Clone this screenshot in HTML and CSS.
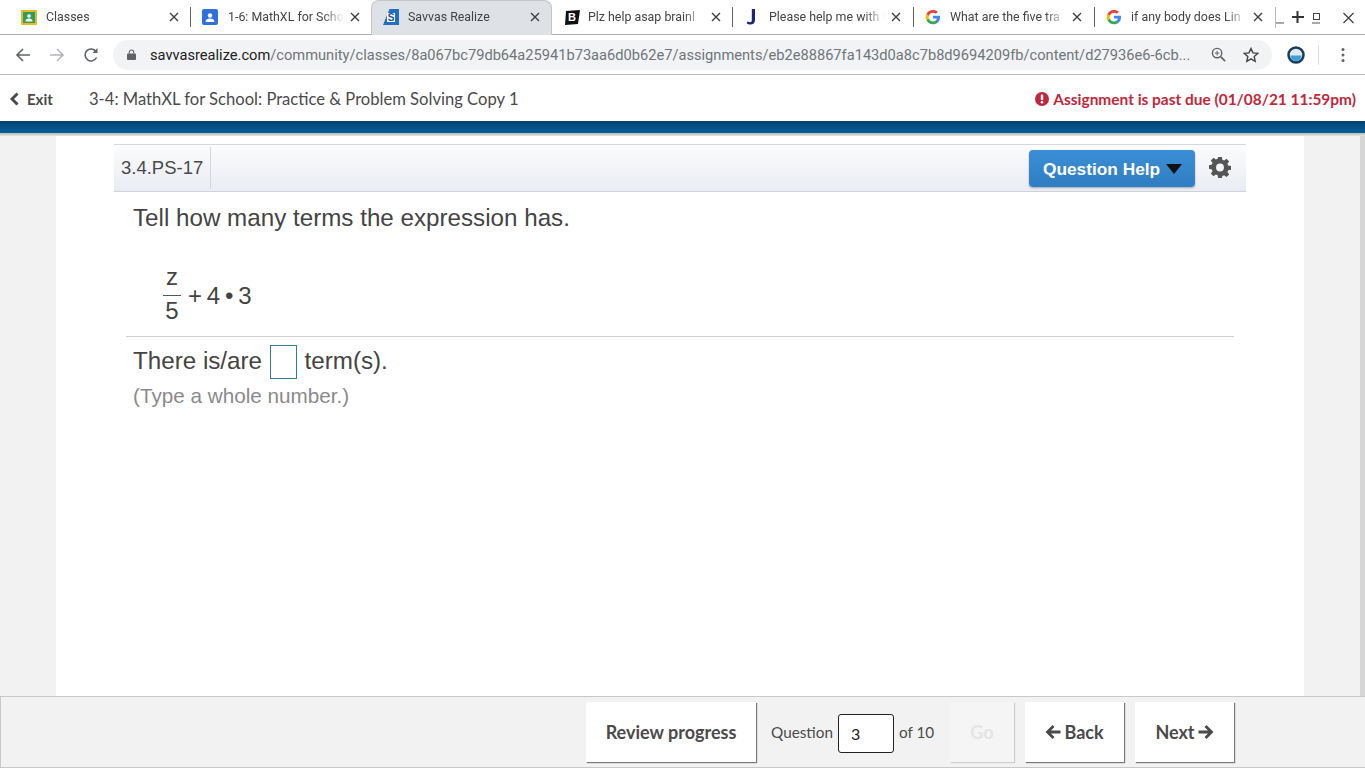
FILE: index.html
```html
<!DOCTYPE html>
<html lang="en">
  <head>
    <meta charset="UTF-8" />
    <title>Savvas Realize</title>
    <link rel="stylesheet" href="styles.css">
  </head>
  <body>
    <!-- browser chrome -->
    <div class="tabstrip">
      <div class="tab tab-first">
        <svg class="favicon" viewBox="0 0 16 16"><rect y="1" width="16" height="15" rx="1" fill="#e9b824"/><rect x="2" y="3" width="12" height="11" fill="#2f9e5b"/><circle cx="8" cy="7" r="1.800" fill="#fff"/><path d="M4.500 12.500c0-2.200 1.500-3 3.500-3s3.500.8 3.500 3z" fill="#fff"/></svg>
        <span class="tab-title">Classes</span>
        <svg class="tab-x" viewBox="0 0 10 10"><path d="M1 1l8 8M9 1L1 9"/></svg>
      </div>
      <div class="tab tab-second">
        <svg class="favicon" viewBox="0 0 16 16"><rect width="16" height="16" rx="2" fill="#2f6fde"/><circle cx="8" cy="6.500" r="2.200" fill="#fff"/><path d="M3.500 13c0-2.600 2-3.600 4.500-3.600s4.500 1 4.500 3.600z" fill="#fff"/></svg>
        <span class="tab-title">1-6: MathXL for Scho</span>
        <svg class="tab-x" viewBox="0 0 10 10"><path d="M1 1l8 8M9 1L1 9"/></svg>
      </div>
      <div class="tab tab-active">
        <svg class="favicon" viewBox="0 0 16 16"><path d="M0 16L6.500 0H16v16z" fill="#1f6fc4"/><rect x="4" y="4" width="8" height="9" fill="#fff"/><text x="8" y="12" class="favicon-s">S</text></svg>
        <span class="tab-title">Savvas Realize</span>
        <svg class="tab-x" viewBox="0 0 10 10"><path d="M1 1l8 8M9 1L1 9"/></svg>
      </div>
      <div class="tab tab-fourth">
        <svg class="favicon" viewBox="0 0 16 16"><path d="M2 2l14-1-2 14-13 1z" fill="#111"/><text x="8" y="12" class="favicon-b">B</text></svg>
        <span class="tab-title">Plz help asap brainl</span>
        <svg class="tab-x" viewBox="0 0 10 10"><path d="M1 1l8 8M9 1L1 9"/></svg>
      </div>
      <div class="tab tab-sep">
        <svg class="favicon" viewBox="0 0 16 16"><path d="M11 0v11c0 3-2 4.500-4.500 4.500-1.500 0-3-.5-3.800-1.300l1-2c.7.6 1.500 1 2.300 1 1.200 0 1.800-.7 1.800-2.200V0z" fill="#1a237e"/></svg>
        <span class="tab-title">Please help me with t</span>
        <svg class="tab-x" viewBox="0 0 10 10"><path d="M1 1l8 8M9 1L1 9"/></svg>
      </div>
      <div class="tab tab-sep">
        <svg class="favicon" viewBox="0 0 48 48"><path fill="#4285f4" d="M45 24.500c0-1.600-.1-3.100-.4-4.500H24v8.500h11.800c-.5 2.700-2 5-4.400 6.600v5.500h7.100c4.200-3.900 6.500-9.500 6.500-16.100z"/><path fill="#34a853" d="M24 46c5.900 0 10.900-2 14.500-5.400l-7.100-5.500c-2 1.300-4.500 2.100-7.400 2.100-5.700 0-10.500-3.800-12.200-9H4.500v5.700C8.100 41.100 15.500 46 24 46z"/><path fill="#fbbc05" d="M11.800 28.700c-.4-1.300-.7-2.700-.7-4.200s.3-2.900.7-4.200v-5.700H4.500C3 17.600 2 21 2 24.500s1 6.900 2.500 9.900z"/><path fill="#ea4335" d="M24 11.300c3.200 0 6.100 1.100 8.400 3.300l6.300-6.300C34.900 4.800 29.900 3 24 3 15.500 3 8.100 7.900 4.500 14.600l7.300 5.700c1.700-5.200 6.500-9 12.200-9z"/></svg>
        <span class="tab-title">What are the five tra</span>
        <svg class="tab-x" viewBox="0 0 10 10"><path d="M1 1l8 8M9 1L1 9"/></svg>
      </div>
      <div class="tab tab-sep">
        <svg class="favicon" viewBox="0 0 48 48"><path fill="#4285f4" d="M45 24.500c0-1.600-.1-3.100-.4-4.500H24v8.500h11.800c-.5 2.700-2 5-4.400 6.600v5.500h7.100c4.200-3.900 6.500-9.500 6.500-16.100z"/><path fill="#34a853" d="M24 46c5.900 0 10.900-2 14.500-5.400l-7.100-5.500c-2 1.300-4.500 2.100-7.400 2.100-5.700 0-10.500-3.800-12.200-9H4.500v5.700C8.100 41.100 15.500 46 24 46z"/><path fill="#fbbc05" d="M11.800 28.700c-.4-1.300-.7-2.700-.7-4.200s.3-2.900.7-4.200v-5.700H4.500C3 17.600 2 21 2 24.500s1 6.900 2.500 9.900z"/><path fill="#ea4335" d="M24 11.300c3.200 0 6.100 1.100 8.400 3.300l6.300-6.300C34.900 4.800 29.900 3 24 3 15.500 3 8.100 7.900 4.500 14.600l7.300 5.700c1.700-5.200 6.500-9 12.200-9z"/></svg>
        <span class="tab-title">if any body does Lin</span>
        <svg class="tab-x" viewBox="0 0 10 10"><path d="M1 1l8 8M9 1L1 9"/></svg>
      </div>
      <div class="window-btns">
        <svg class="win-icons" viewBox="0 0 89 34">
          <path d="M0 7v21" stroke="#777" fill="none"/>
          <path d="M1 23h8" stroke="#555" fill="none"/>
          <path d="M22.500 11v12M17 17h12" stroke="#333" stroke-width="2" fill="none"/>
          <rect x="38.500" y="13.500" width="6" height="6" stroke="#444" fill="none"/>
          <path d="M37 23h8" stroke="#555" fill="none"/>
          <path d="M68.500 13l10 10M78.500 13l-10 10" stroke="#444" stroke-width="1.300" fill="none"/>
        </svg>
      </div>
    </div>

    <div class="addressbar">
      <svg class="nav-icon" viewBox="0 0 16 16"><path d="M15 8H2M8 2L2 8l6 6" fill="none" stroke="#5f6368" stroke-width="1.600"/></svg>
      <svg class="nav-icon" viewBox="0 0 16 16"><path d="M1 8h13M8 2l6 6-6 6" fill="none" stroke="#b4b7bb" stroke-width="1.600"/></svg>
      <svg class="nav-icon" viewBox="0 0 16 16"><path d="M13.500 10.500A6 6 0 1 1 13 4.500" fill="none" stroke="#5f6368" stroke-width="1.600"/><path d="M14.500 1v5h-5z" fill="#5f6368"/></svg>
      <div class="omnibox">
        <svg class="lock" viewBox="0 0 10 12"><path d="M2.500 5V3.500a2.500 2.500 0 0 1 5 0V5" fill="none" stroke="#5f6368" stroke-width="1.200"/><rect y="5" width="10" height="7" rx="1" fill="#5f6368"/></svg>
        <span class="url"><span class="url-host">savvasrealize.com</span>/community/classes/8a067bc79db64a25941b73aa6d0b62e7/assignments/eb2e88867fa143d0a8c7b8d9694209fb/content/d27936e6-6cb...</span>
        <svg class="omni-icon" viewBox="0 0 16 16"><circle cx="6.500" cy="6.500" r="5" fill="none" stroke="#5f6368" stroke-width="1.500"/><path d="M10.500 10.500L15 15" stroke="#5f6368" stroke-width="1.800"/><path d="M4 6.500h5M6.500 4v5" stroke="#5f6368"/></svg>
        <svg class="omni-star" viewBox="0 0 16 16"><path d="M8 1.500l2 4.400 4.700.5-3.500 3.200 1 4.700L8 11.900l-4.200 2.400 1-4.700L1.300 6.400 6 5.900z" fill="none" stroke="#444" stroke-width="1.400"/></svg>
      </div>
      <svg class="profile" viewBox="0 0 18 18"><circle cx="9" cy="9" r="7.500" fill="#dfeaf3" stroke="#1c3c5a" stroke-width="2.500"/><path d="M3.500 9.500h11a5.500 5.500 0 0 1-11 0z" fill="#3aa0d8"/></svg>
      <span class="bar-divider"></span>
      <svg class="kebab" viewBox="0 0 4 16"><circle cx="2" cy="2.500" r="1.500" fill="#5f6368"/><circle cx="2" cy="8" r="1.500" fill="#5f6368"/><circle cx="2" cy="13.500" r="1.500" fill="#5f6368"/></svg>
    </div>

    <!-- app header -->
    <header class="app-header">
      <a class="exit"><svg class="exit-chevron" viewBox="0 0 9 14"><path d="M7.500 1.500L2 7l5.500 5.500" fill="none" stroke="#4a4a4a" stroke-width="3"/></svg>Exit</a>
      <div class="assignment-title">3-4: MathXL for School: Practice &amp; Problem Solving Copy 1</div>
      <div class="past-due">
        <svg class="due-icon" viewBox="0 0 14 14"><circle cx="7" cy="7" r="7" fill="#c1273b"/><rect x="5.800" y="2.500" width="2.400" height="5.700" rx="1" fill="#fff"/><circle cx="7" cy="10.300" r="1.300" fill="#fff"/></svg>
        Assignment is past due (01/08/21 11:59pm)
      </div>
    </header>
    <div class="blue-band"></div>

    <main class="stage">
      <div class="sheet">
        <div class="question-bar">
          <div class="question-id">3.4.PS-17</div>
          <button class="help-btn">Question Help<span class="caret"></span></button>
          <svg class="gear" viewBox="0 0 24 24"><path fill="#555" fill-rule="evenodd" d="M10 1h4l.6 3.100 1.900.8L19.100 3 22 5.900l-1.900 2.600.8 1.900L24 11v4l-3.100.6-.8 1.900 1.900 2.600-2.900 2.900-2.600-1.900-1.900.8L14 24h-4l-.6-3.100-1.900-.8L4.900 22 2 19.100l1.900-2.600-.8-1.900L0 14v-4l3.100-.6.8-1.900L2 4.900 4.900 2l2.600 1.900 1.900-.8zM12 8.200a4.300 4.300 0 1 0 0 8.600 4.300 4.300 0 0 0 0-8.600z"/></svg>
        </div>
        <div class="question-body">
          <p class="prompt">Tell how many terms the expression has.</p>
          <div class="expression">
            <span class="fraction"><span class="numer">z</span><span class="denom">5</span></span>
            <span class="expr-rest">+&thinsp;4&thinsp;•&thinsp;3</span>
          </div>
        </div>
        <div class="answer-area">
          <div class="answer-line">There is/are <span class="answer-box"></span> term(s).</div>
          <div class="hint">(Type a whole number.)</div>
        </div>
      </div>
    </main>

    <footer class="footer-bar">
      <button class="foot-btn review-btn">Review progress</button>
      <div class="question-nav">
        <span>Question</span>
        <span class="question-input">3</span>
        <span>of 10</span>
      </div>
      <button class="foot-btn go-btn">Go</button>
      <button class="foot-btn back-btn"><svg class="arrow arrow-back" viewBox="0 0 16 14"><path d="M7.500 0l2 2L6 5.500h9.500v3H6L9.500 12l-2 2L.5 7z" fill="#4a4a4a"/></svg>Back</button>
      <button class="foot-btn next-btn">Next<svg class="arrow arrow-next" viewBox="0 0 16 14"><path d="M8.500 0l-2 2L10 5.500H.5v3H10L6.500 12l2 2 7-7z" fill="#4a4a4a"/></svg></button>
    </footer>
  </body>
</html>
```

FILE: styles.css
```css
* {
  box-sizing: border-box;
}

html, body {
  height: 100%;
}

body {
  margin: 0;
  height: 768px;
  overflow: hidden;
  display: flex;
  flex-direction: column;
  background: #f2f2f2;
  font-family: "Liberation Sans", Arial, sans-serif;
  color: #444;
}

/* tab strip */
.tabstrip {
  height: 35px;
  flex: none;
  display: flex;
  background: #fff;
  border-bottom: 1px solid #a9abae;
  font-family: Roboto, sans-serif;
  font-size: 12.4px;
  color: #444;
}

.tab {
  display: flex;
  align-items: center;
  width: 181px;
  height: 34px;
  padding: 0 11px 0 12px;
  position: relative;
  flex: none;
}

.tab-first {
  width: 190px;
  padding-left: 21px;
}

.tab-second {
  padding-left: 12px;
}

.tab-second .favicon {
  margin-right: 10px;
}

.tab-second::before, .tab-sep::before {
  content: "";
  position: absolute;
  left: 0;
  top: 7px;
  height: 20px;
  width: 1px;
  background: #5f6368;
}

.tab-active {
  background: #dee1e6;
  border-radius: 8px 8px 0 0;
  padding-left: 11px;
  height: 35px;
  padding-bottom: 2px;
  border: 1px solid #c3c5c8;
  border-bottom: none;
}

.tab-fourth {
  width: 180px;
}

.tab-fourth .favicon {
  margin-right: 8px;
}

.tab-sep {
  padding-right: 12px;
}

.favicon {
  width: 16px;
  height: 16px;
  flex: none;
  margin-right: 9px;
}

.favicon-s, .favicon-b {
  font-family: "Liberation Sans", sans-serif;
  font-weight: bold;
  text-anchor: middle;
}

.favicon-s {
  font-size: 10px;
  fill: #1f4f8f;
}

.favicon-b {
  font-size: 11px;
  fill: #fff;
}

.tab-title {
  flex: 1;
  min-width: 0;
  overflow: hidden;
  white-space: nowrap;
  margin-top: -1px;
  -webkit-mask-image: linear-gradient(to right, #000 calc(100% - 22px), transparent calc(100% - 1px));
  mask-image: linear-gradient(to right, #000 calc(100% - 22px), transparent calc(100% - 1px));
}

.tab-x {
  width: 10px;
  height: 10px;
  flex: none;
  margin-left: 5px;
  fill: none;
  stroke: #3c4043;
  stroke-width: 1.400;
}

.window-btns {
  flex: 1;
  min-width: 0;
}

.win-icons {
  display: block;
  width: 89px;
  height: 34px;
}

/* address bar */
.addressbar {
  height: 40px;
  flex: none;
  display: flex;
  align-items: center;
  background: #fff;
  border-bottom: 1px solid #b8babc;
  padding-left: 15px;
}

.nav-icon {
  width: 16px;
  height: 16px;
  flex: none;
  margin-right: 18px;
}

.omnibox {
  width: 1159px;
  height: 30px;
  flex: none;
  display: flex;
  align-items: center;
  margin-left: -4px;
  padding-left: 14px;
  border-radius: 15px;
  background: #f1f3f4;
  font-family: Roboto, sans-serif;
  font-size: 14.65px;
}

.lock {
  width: 9px;
  height: 11px;
  flex: none;
  margin-right: 14px;
}

.url {
  width: 1043px;
  flex: none;
  white-space: nowrap;
  overflow: hidden;
  color: #70757a;
}

.url-host {
  color: #202124;
}

.omni-icon {
  width: 15px;
  height: 15px;
  flex: none;
  margin-left: 18px;
}

.omni-star {
  width: 16px;
  height: 16px;
  flex: none;
  margin-left: 17px;
}

.profile {
  width: 18px;
  height: 18px;
  flex: none;
  margin-left: 15px;
}

.bar-divider {
  width: 1px;
  height: 20px;
  background: #dadce0;
  margin-left: 13px;
  flex: none;
}

.kebab {
  width: 4px;
  height: 16px;
  flex: none;
  margin-left: 22px;
}

/* app header */
.app-header {
  height: 46px;
  flex: none;
  display: flex;
  align-items: center;
  background: #fff;
  font-family: Lato, sans-serif;
  font-size: 16px;
  color: #4a4a4a;
  padding: 1px 9px 0 10px;
}

.exit {
  display: flex;
  align-items: center;
  width: 79px;
  font-weight: 700;
  font-size: 15px;
  padding-top: 1px;
}

.exit-chevron {
  width: 9px;
  height: 14px;
  margin-right: 8px;
}

.assignment-title {
  flex: 1;
  font-size: 16.6px;
}

.past-due {
  display: flex;
  align-items: center;
  color: #c1273b;
  font-weight: 700;
  font-size: 15.45px;
  padding-top: 1px;
}

.due-icon {
  width: 14px;
  height: 14px;
  margin-right: 4px;
}

.blue-band {
  height: 15px;
  flex: none;
  background: linear-gradient(to bottom, #033f6e, #04609a 12px, #b9b6ae 12px, #e6e5e1 15px);
}

/* question sheet */
.stage {
  flex: 1;
  min-height: 0;
  padding-left: 56px;
  background: linear-gradient(to right, #f2f2f2 1360px, #d6d6d6 1360px);
}

.sheet {
  width: 1248px;
  height: 100%;
  background: #fff;
  padding: 8px 58px 0;
}

.question-bar {
  height: 48px;
  display: flex;
  align-items: center;
  background: linear-gradient(to bottom, #fbfcfd, #e9ecf2);
  border-top: 1px solid #d6d8dc;
  border-bottom: 1px solid #cfd2d8;
}

.question-id {
  height: 42px;
  width: 97px;
  padding-left: 7px;
  display: flex;
  align-items: center;
  border-right: 1px solid #d4d6da;
  font-size: 18.5px;
  color: #4a4a4a;
  margin-bottom: 1px;
}

.help-btn {
  margin-left: auto;
  height: 37px;
  width: 166px;
  display: flex;
  align-items: center;
  padding: 2px 0 0 14px;
  border: none;
  border-radius: 4px;
  background: linear-gradient(to bottom, #3b8fd6, #2f7dc2);
  box-shadow: 0 1px 2px rgba(0, 0, 0, 0.3);
  color: #fff;
  font-family: "Liberation Sans", sans-serif;
  font-size: 17.3px;
  font-weight: bold;
}

.caret {
  width: 0;
  height: 0;
  margin-left: 6px;
  border-left: 8px solid transparent;
  border-right: 8px solid transparent;
  border-top: 10px solid #111;
}

.gear {
  width: 22px;
  height: 22px;
  margin: 0 15px 3px 14px;
}

.question-body {
  margin: 0 12px;
  padding: 0 7px;
  height: 145px;
  border-bottom: 1px solid #cfcfcf;
}

.prompt {
  margin: 0;
  padding-top: 12px;
  font-size: 24.2px;
  line-height: 28px;
  color: #444;
}

.expression {
  display: flex;
  align-items: center;
  margin: 32px 0 0 30px;
  font-size: 24px;
}

.fraction {
  display: flex;
  flex-direction: column;
  align-items: center;
  width: 18px;
  margin-right: 7px;
}

.numer {
  line-height: 26px;
  padding-bottom: 5px;
  width: 100%;
  text-align: center;
  border-bottom: 1px solid #555;
}

.denom {
  line-height: 30px;
}

.expr-rest {
  padding-top: 2px;
}

.answer-area {
  padding: 8px 0 0 19px;
}

.answer-line {
  display: flex;
  align-items: center;
  font-size: 24.2px;
  height: 34px;
  padding-bottom: 2px;
  white-space: pre;
}

.answer-box {
  align-self: flex-start;
  width: 27px;
  height: 34px;
  margin: 0 1px;
  border: 1px solid #2e7f94;
  background: #fff;
}

.hint {
  margin-top: 3px;
  font-size: 20.7px;
  line-height: 28px;
  color: #8a8a8a;
}

/* footer */
.footer-bar {
  height: 72px;
  flex: none;
  display: flex;
  align-items: flex-start;
  padding: 5px 0 0 585px;
  background: #f2f2f2;
  border-top: 1px solid #c8c8c8;
  border-bottom: 1px solid #c8c8c8;
  border-left: 1px solid #c8c8c8;
  font-family: Lato, sans-serif;
  color: #4a4a4a;
}

.foot-btn {
  height: 60px;
  border: none;
  background: #fff;
  box-shadow: 1px 1px 1px rgba(0, 0, 0, 0.5);
  font-family: Lato, sans-serif;
  font-size: 18px;
  font-weight: 700;
  color: #4a4a4a;
  padding: 0;
  display: flex;
  align-items: center;
  justify-content: center;
}

.review-btn {
  width: 170px;
}

.question-nav {
  width: 194px;
  height: 60px;
  display: flex;
  align-items: center;
  padding-left: 15px;
  font-size: 15.3px;
}

.question-input {
  width: 56px;
  height: 39px;
  margin: 2px 5px 0;
  padding-left: 12px;
  display: flex;
  align-items: center;
  background: #fff;
  border: 1px solid #222;
  border-radius: 3px;
  color: #222;
  font-size: 16px;
}

.go-btn {
  width: 64px;
  color: #e4e4e4;
  background: #f5f5f5;
  box-shadow: 1px 1px 1px rgba(0, 0, 0, 0.15);
  margin-right: 11px;
}

.back-btn {
  width: 99px;
  margin-right: 11px;
}

.next-btn {
  width: 99px;
}

.arrow {
  width: 16px;
  height: 14px;
}

.arrow-back {
  margin-right: 3px;
}

.arrow-next {
  margin-left: 3px;
}
```
